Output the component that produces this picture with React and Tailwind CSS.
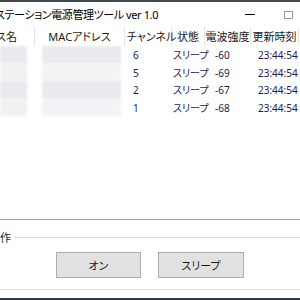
import React from 'react';

const rows = [
  { ch: '6', state: 'スリープ', rssi: '-60', time: '23:44:54' },
  { ch: '5', state: 'スリープ', rssi: '-69', time: '23:44:54' },
  { ch: '2', state: 'スリープ', rssi: '-67', time: '23:44:54' },
  { ch: '1', state: 'スリープ', rssi: '-68', time: '23:44:54' },
];

const App = () => {
  return (
    <div className="w-[300px] h-[300px] overflow-hidden bg-white flex flex-col font-['Noto_Sans','Noto_Sans_CJK_JP',sans-serif] [font-feature-settings:'palt'] text-[11px] leading-none text-black">
      {/* window top edge */}
      <div className="h-[2px] bg-[#3d4b50] shrink-0" />

      {/* title bar */}
      <div className="h-[25px] shrink-0 flex items-center">
        <span className="ml-[-5px] text-[11px] tracking-[-0.4px] whitespace-nowrap">ステーション電源管理ツール ver 1.0</span>
        <div className="ml-auto flex items-center">
          <div className="w-[10px] h-px bg-black mr-[29px]" />
          <div className="w-[9px] h-[8px] border border-[#9a9a9a] mr-[7px]" />
        </div>
      </div>

      {/* list header */}
      <div className="h-[19px] shrink-0 flex items-stretch text-[#1a1a1a] whitespace-nowrap">
        <div className="w-[35px] shrink-0 border-r border-[#e5e5e5] flex items-center justify-end pr-[17px]">ス名</div>
        <div className="w-[90px] shrink-0 border-r border-[#e5e5e5] flex items-center justify-center">MACアドレス</div>
        <div className="w-[47px] shrink-0 border-r border-[#e5e5e5] flex items-center pl-[2px]">チャンネル</div>
        <div className="w-[33px] shrink-0 border-r border-[#e5e5e5] flex items-center justify-center">状態</div>
        <div className="w-[46px] shrink-0 border-r border-[#e5e5e5] flex items-center justify-center">電波強度</div>
        <div className="w-[48px] shrink-0 border-r border-[#e5e5e5] flex items-center justify-center">更新時刻</div>
      </div>

      {/* list rows */}
      <div className="flex-1 flex flex-col text-[10px] text-[#1c1c52]">
        {rows.map((r, i) => (
          <div key={i} className={`${i % 2 ? 'h-[17px]' : 'h-[18px]'} flex items-center whitespace-nowrap`}>
            <div className="w-[35px] shrink-0 h-full flex items-center">
              <div className={`w-[27px] h-full blur-[1px] ${i % 2 ? 'bg-[#f1f1f4]' : 'bg-[#eaeaee]'}`} />
            </div>
            <div className="w-[90px] shrink-0 h-full flex items-center pl-[7px]">
              <div className={`w-[79px] h-full blur-[1px] ${i % 2 ? 'bg-[#f3f3f6]' : 'bg-[#ebebef]'}`} />
            </div>
            <div className="w-[47px] shrink-0 pl-[8px]">{r.ch}</div>
            <div className="w-[33px] shrink-0 pl-[1px]">{r.state}</div>
            <div className="w-[46px] shrink-0 pl-[10px]">{r.rssi}</div>
            <div className="w-[48px] shrink-0 pl-[7px]">{r.time}</div>
          </div>
        ))}
      </div>

      {/* splitter */}
      <div className="h-px bg-[#a0a0a0] shrink-0" />

      {/* operation group */}
      <div className="shrink-0 flex flex-col">
        <div className="h-[32px] pt-[2px] flex items-center">
          <span className="ml-[-11px] text-[#1a1a1a]">動作</span>
          <div className="flex-1 h-px bg-[#dcdcdc] ml-[3px]" />
        </div>
        <div className="flex justify-center gap-[17px]">
          <button className="w-[85px] h-[26px] bg-[#e1e1e1] border border-[#adadad] text-[#1a1a1a]">オン</button>
          <button className="w-[86px] h-[26px] bg-[#e1e1e1] border border-[#adadad] text-[#1a1a1a]">スリープ</button>
        </div>
        <div className="h-[11px]" />
        <div className="h-px bg-[#dcdcdc]" />
      </div>

      <div className="h-[8px] shrink-0 bg-white" />
      <div className="h-[2px] shrink-0 bg-[#2f3d3f]" />
    </div>
  );
};

export default App;
